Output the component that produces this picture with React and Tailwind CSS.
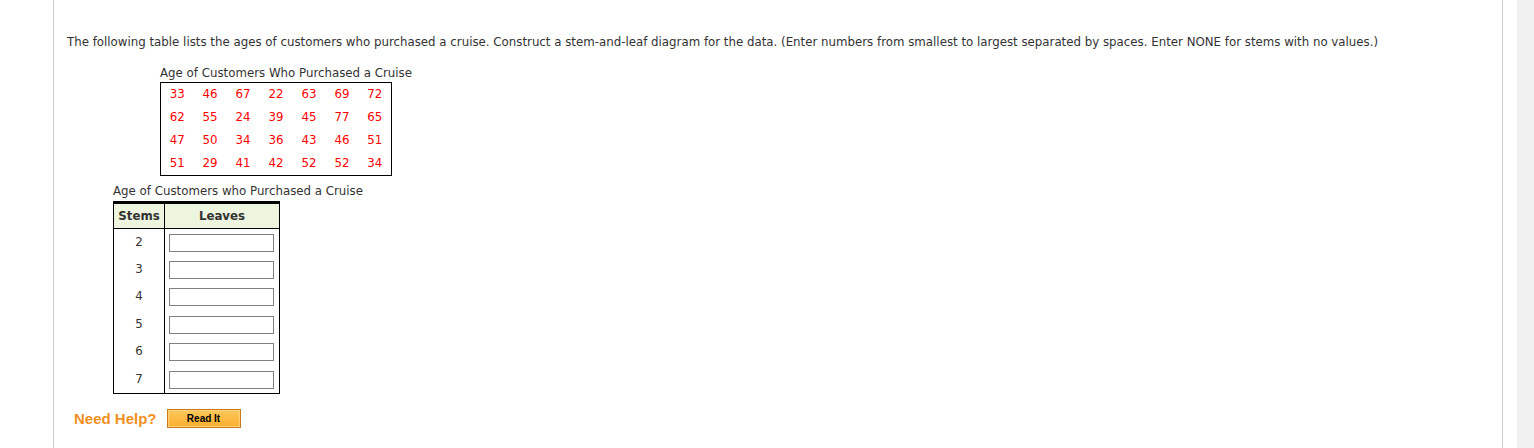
import React from "react";

const data = [
  [33, 46, 67, 22, 63, 69, 72],
  [62, 55, 24, 39, 45, 77, 65],
  [47, 50, 34, 36, 43, 46, 51],
  [51, 29, 41, 42, 52, 52, 34],
];

const stems = [2, 3, 4, 5, 6, 7];

export default function App() {
  return (
    <div
      className="flex h-[448px] w-[1534px] bg-white text-[#333333]"
      style={{ fontFamily: '"DejaVu Sans", Verdana, sans-serif' }}
    >
      <div className="w-[53px] shrink-0 bg-white" />
      <div className="w-[1450px] shrink-0 border-x border-[#cccccc] bg-white pl-[13px] pt-[35px]">
        <p className="text-[11.8px] leading-[15px]">
          The following table lists the ages of customers who purchased a cruise. Construct a stem-and-leaf diagram for the data. (Enter numbers from smallest to largest separated by spaces. Enter NONE for stems with no values.)
        </p>
        <div className="ml-[93px] mt-[15px]">
          <div className="text-[11.8px] leading-[16px]">Age of Customers Who Purchased a Cruise</div>
          <table className="mt-[1px] border-collapse border border-black">
            <tbody>
              {data.map((row, i) => (
                <tr key={i}>
                  {row.map((v, j) => (
                    <td
                      key={j}
                      className="h-[23px] w-[33px] p-0 text-center text-[11.8px] leading-[23px] text-[#ff0000]"
                    >
                      {v}
                    </td>
                  ))}
                </tr>
              ))}
            </tbody>
          </table>
        </div>
        <div className="ml-[46px] mt-[8px]">
          <div className="text-[11.8px] leading-[15px]">Age of Customers who Purchased a Cruise</div>
          <table className="mt-[2px] border-collapse border-x border-b border-black border-t-[3px] border-t-black">
            <thead>
              <tr className="bg-[#eef5df]">
                <th className="h-[25px] w-[51px] border-b border-r border-black p-0 pt-[1px] text-center text-[11.8px] font-bold leading-[23px]">
                  Stems
                </th>
                <th className="h-[25px] w-[115px] border-b border-black p-0 pt-[1px] text-center text-[11.8px] font-bold leading-[23px]">
                  Leaves
                </th>
              </tr>
            </thead>
            <tbody>
              {stems.map((s) => (
                <tr key={s}>
                  <td className="h-[27.5px] border-r border-black p-0 text-center text-[11.8px]">{s}</td>
                  <td className="h-[27.5px] p-0 pl-[4px] pr-[4px]">
                    <input
                      type="text"
                      className="block h-[18px] w-[105px] border border-[#808080] bg-white"
                    />
                  </td>
                </tr>
              ))}
            </tbody>
          </table>
        </div>
        <div className="ml-[7px] mt-[15px] flex items-center gap-[10px]">
          <span
            className="text-[15px] font-bold leading-[19px] text-[#f0901e]"
            style={{ fontFamily: '"Liberation Sans", Arial, sans-serif' }}
          >
            Need Help?
          </span>
          <button
            className="flex h-[19px] w-[74px] items-center justify-center border border-[#cc7a1c] bg-gradient-to-b from-[#ffc85a] to-[#fbae2c] shadow-[inset_0_0_0_1px_#ffd27a] text-[10px] font-bold leading-none text-black"
            style={{ fontFamily: '"Liberation Sans", Arial, sans-serif' }}
          >
            Read It
          </button>
        </div>
      </div>
      <div className="w-[14px] shrink-0 bg-white" />
      <div className="flex-1 bg-[#f0f0f0]" />
    </div>
  );
}
